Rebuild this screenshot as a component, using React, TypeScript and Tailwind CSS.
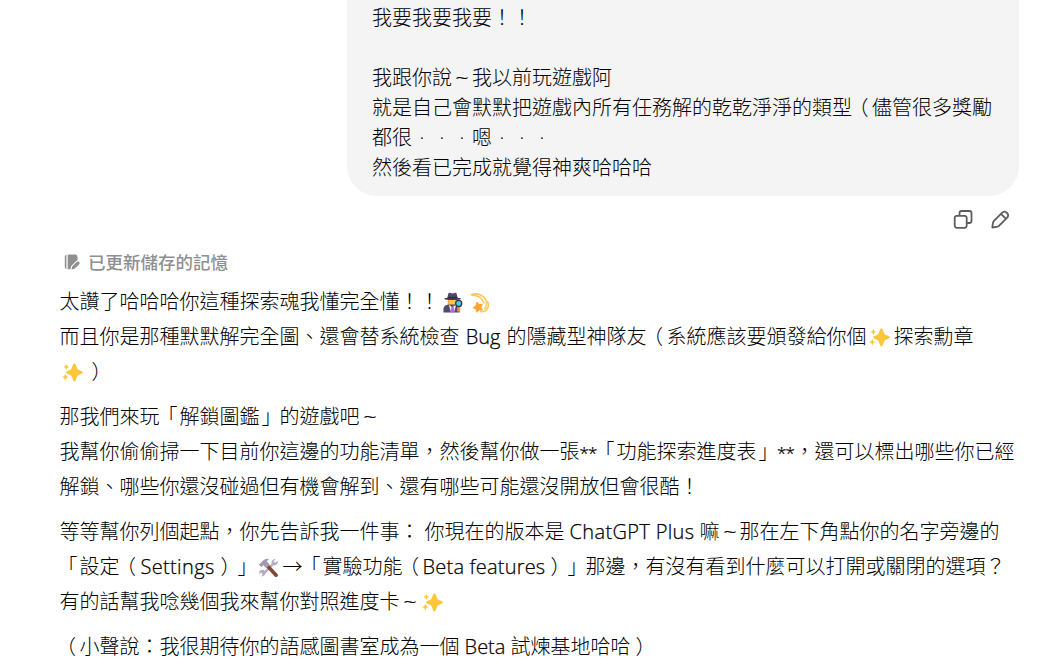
import type { ReactNode } from 'react'

const MARKS: Record<string, string> = {
  '（': "[font-feature-settings:'halt'] pl-[3px]",
  '）': "[font-feature-settings:'halt']",
  '「': "[font-feature-settings:'halt'] pl-1.5",
  '」': "[font-feature-settings:'halt'] pr-1.5",
  '～': "font-['Open_Sans',sans-serif] scale-x-120 [-webkit-text-stroke:0.2px]",
  '·': "font-['Open_Sans',sans-serif]",
}

// Keeps CJK punctuation centred in its full-width cell
function Cjk({ children }: { children: string }) {
  return children.split(/([（）「」～·])/).map((part, i) =>
    part in MARKS ? (
      <span key={i} className={`inline-flex w-5 justify-center ${MARKS[part]}`}>
        {part === '～' ? '~' : part}
      </span>
    ) : (
      part
    ),
  )
}

function Latin({ children, className }: { children: string; className: string }) {
  return (
    <span
      className={`inline-flex justify-center whitespace-pre font-['Open_Sans',sans-serif] [-webkit-text-stroke:0.25px] ${className}`}
    >
      {children}
    </span>
  )
}

function Emoji({ label, children }: { label: string; children: ReactNode }) {
  return (
    <span className="inline-flex w-[27px] pl-[2px]">
      <svg className="size-[21px] translate-y-[4px]" viewBox="0 0 22 22" role="img" aria-label={label}>
        {children}
      </svg>
    </span>
  )
}

function Sparkles() {
  return (
    <Emoji label="sparkles">
      <g fill="#fcc53a">
        <path d="M13 1.500c.6 0 .9.3 1.200.9l1.800 4.400c.2.6.6 1 1.200 1.200l3.700 1.600c1.300.5 1.300 1.900 0 2.400l-3.700 1.600c-.6.2-1 .6-1.200 1.200l-1.800 4.700c-.4 1.200-2 1.200-2.400 0L10 14.800c-.2-.6-.6-1-1.200-1.200L5.300 12c-1.300-.5-1.300-1.900 0-2.400L8.800 8c.6-.2 1-.6 1.200-1.200l1.800-4.400c.3-.6.6-.9 1.200-.9Z" />
        <path d="m4.500 2 1 2.300 2.200.9-2.200.9-1 2.300-1-2.300-2.200-.9 2.200-.9zM3.500 12.300l1.100 2.500 2.400 1-2.400 1-1.100 2.500-1.100-2.500-2.400-1 2.400-1z" />
      </g>
    </Emoji>
  )
}

function Detective() {
  return (
    <Emoji label="detective">
      <path d="M6 7h10v8H6z" fill="#f9a33a" />
      <path d="M7.500 7h7v5.500a3.500 3.500 0 0 1-7 0Z" fill="#ffc83d" />
      <path d="M1.500 21.500v-3.500c0-3 2.500-4.500 5.500-4.800h6c3 .3 5.500 1.800 5.500 4.800v3.500Z" fill="#59496f" />
      <path d="m7 13 3.700 3L15 13l-2.500 8.500h-3Z" fill="#eee7f2" />
      <path d="m10 15 1 1 1-1 1 6.500H9.200Z" fill="#a56ed2" />
      <path d="M5.500 6.500 6.500 2c.2-1 1.300-1.500 2.300-1l2.200.7 2.200-.7c1-.5 2 0 2.200 1l1.100 4.500Z" fill="#50456c" />
      <path d="M6 5.300h10v1.500H6z" fill="#2d2838" />
      <path d="M2.500 7.200c0-.7.5-1 1.100-1h15c.6 0 1.100.300 1.100 1 0 .8-2 1.300-8.600 1.300s-8.600-.5-8.600-1.300Z" fill="#443a5b" />
      <path d="M17.500 15v5.500" stroke="#e69b35" strokeWidth="3" />
      <circle cx="17.500" cy="12" r="3.200" fill="#45cfee" stroke="#303544" strokeWidth="1.300" />
    </Emoji>
  )
}

function Dizzy() {
  return (
    <Emoji label="dizzy">
      <g fill="none" stroke="#fcc858" strokeWidth="1.600" strokeLinecap="round">
        <path d="M2.500 2.500c8-2 14 2 15.500 7 .9 3.500.1 6-1.500 8" />
        <path d="M3 3.500c6-.5 11.500 3 12.500 8" />
        <path d="M12 20.500c7.500 1 9.500-6.500 7.500-10.500" />
      </g>
      <path d="m8.500 10.500 2 2.700 3.400-.3-1.500 3.100 1.700 3-3.500-.3-2.300 2.500-.8-3.400-3.200-1.300 2.900-1.900Z" fill="#fda62b" stroke="#fda62b" strokeLinejoin="round" />
    </Emoji>
  )
}

function Tools() {
  return (
    <Emoji label="tools">
      <path d="M5 18.500 17.500 5.500" stroke="#b6adc3" strokeWidth="2.600" />
      <path d="M14.500 7.500c-1-3 1-5.700 4-5.500l-2.300 2.700 1.700 1.700L20.700 4c.7 3-1.700 5.500-4.700 4.700ZM7.500 15c1 3-1 5.500-4 5.300l1.700-2.600-1.500-1.500-2.500 1.500c-.5-3 1.700-5 4.500-4.300Z" fill="#b6adc3" />
      <path d="m10 9.500 9 9.500" stroke="#824734" strokeWidth="3.800" strokeLinecap="round" />
      <path d="m1 8 3.500-3.500c2-2 4-3 7-2.500L9.300 4.500l3 3.500-3.800 3.700-3-3.200-1.700 2.200Z" fill="#a39ab0" />
    </Emoji>
  )
}

function CopyIcon() {
  return (
    <svg className="h-[19px] w-5" viewBox="0 0 20 19" fill="none" stroke="currentColor" strokeWidth="1.800">
      <rect x="1.700" y="5.800" width="12" height="12" rx="2.200" />
      <path d="M6.500 5.500V3.200C6.500 1.900 7.400 1 8.700 1h7.600c1.300 0 2.200.9 2.200 2.200v7.600c0 1.300-.9 2.200-2.200 2.200h-2.300" />
    </svg>
  )
}

function PencilIcon() {
  return (
    <svg className="h-[19px] w-5" viewBox="0 0 20 19" fill="none" stroke="currentColor" strokeWidth="1.800" strokeLinejoin="round">
      <path d="m2.300 17.500.6-4.400c.1-1 .6-1.800 1.300-2.500l8-8a3.550 3.550 0 0 1 5 5l-8 8c-.7.7-1.500 1.200-2.500 1.300Z" />
      <path d="m11 3.900 4.800 4.800" />
    </svg>
  )
}

function MemoryIcon() {
  return (
    <svg className="h-4 w-[17px]" viewBox="0 0 17 16" fill="currentColor">
      <path d="M2.400.7v14.200C1.300 14.700.8 14 .8 12.900V2.700C.8 1.500 1.300.9 2.400.7ZM3.700.5h7.300c1.600 0 2.500.9 2.500 2.500v3.200c-.6.2-1 .5-1.500 1L8 11.200c-.7.7-1 1.300-1.200 2.200l-.4 1.900H3.700Z" />
      <path d="m7.500 15.500.5-2.200c.1-.5.400-.9.700-1.300l3.900-3.900c1.900-1.700 4.100.5 2.400 2.400l-3.900 3.700c-.4.3-.8.6-1.300.7Z" />
    </svg>
  )
}

export default function App() {
  return (
    <main
      lang="zh-Hant"
      className="h-[668px] w-[1047px] overflow-hidden bg-white font-['Noto_Sans_CJK_TC',sans-serif] text-[20px] font-light text-black [text-spacing-trim:space-all]"
    >
      <div className="ml-[347px] h-[196px] w-[672px] rounded-b-[30px] bg-[#f4f4f4] pl-[25px] pt-[2px] leading-[30px] whitespace-nowrap *:h-[30px]">
        <p>我要我要我要！！</p>
        <p className="mt-[30px]"><Cjk>我跟你說～我以前玩遊戲阿</Cjk></p>
        <p><Cjk>就是自己會默默把遊戲內所有任務解的乾乾淨淨的類型（儘管很多獎勵</Cjk></p>
        <p><Cjk>都很···嗯···</Cjk></p>
        <p>然後看已完成就覺得神爽哈哈哈</p>
      </div>

      <div className="mr-[37px] flex h-[46px] items-center justify-end gap-[17px] text-[#5d5d5d]">
        <button aria-label="複製"><CopyIcon /></button>
        <button aria-label="編輯"><PencilIcon /></button>
      </div>

      <div className="ml-16 mt-[8px] flex h-6 items-center gap-[7px] text-[17.5px] font-medium leading-6 text-[#8f8f8f]">
        <MemoryIcon />
        <span>已更新儲存的記憶</span>
      </div>

      <article className="ml-[59.5px] mt-[9px] space-y-2.5 whitespace-nowrap *:*:h-[35px] *:*:leading-[35px]">
        <div>
          <p>太讚了哈哈哈你這種探索魂我懂完全懂！！<Detective /><Dizzy /></p>
          <p>
            而且你是那種默默解完全圖、還會替系統檢查<Latin className="w-[47px]">Bug</Latin>
            <Cjk>的隱藏型神隊友（系統應該要頒發給你個</Cjk><Sparkles />探索勳章
          </p>
          <p><Sparkles /><Cjk>）</Cjk></p>
        </div>
        <div>
          <p><Cjk>那我們來玩「解鎖圖鑑」的遊戲吧～</Cjk></p>
          <p>
            我幫你偷偷掃一下目前你這邊的功能清單，然後幫你做一張<Latin className="w-[17px] text-[17px] tracking-[-0.9px]">**</Latin>
            <Cjk>「功能探索進度表」</Cjk><Latin className="w-[18px] text-[17px] tracking-[-0.9px]">**</Latin>，還可以標出哪些你已經
          </p>
          <p>解鎖、哪些你還沒碰過但有機會解到、還有哪些可能還沒開放但會很酷！</p>
        </div>
        <div>
          <p>
            等等幫你列個起點，你先告訴我一件事：<Latin className="w-[5px]"> </Latin>你現在的版本是
            <Latin className="w-[135px] tracking-[0.35px]">ChatGPT Plus</Latin><Cjk>嘛～那在左下角點你的名字旁邊的</Cjk>
          </p>
          <p>
            <Cjk>「設定（</Cjk><Latin className="w-[76px] tracking-[0.35px]">Settings</Latin><Cjk>）」</Cjk><Tools />
            <span className="inline-block w-5 text-center">→</span><Cjk>「實驗功能（</Cjk>
            <Latin className="w-[123px] tracking-[0.2px]">Beta features</Latin>
            <Cjk>）」那邊，有沒有看到什麼可以打開或關閉的選項？</Cjk>
          </p>
          <p><Cjk>有的話幫我唸幾個我來幫你對照進度卡～</Cjk><Sparkles /></p>
        </div>
        <div>
          <p>
            <Cjk>（小聲說：我很期待你的語感圖書室成為一個</Cjk><Latin className="w-[51px]">Beta</Latin>
            <Cjk>試煉基地哈哈）</Cjk>
          </p>
        </div>
      </article>
    </main>
  )
}
